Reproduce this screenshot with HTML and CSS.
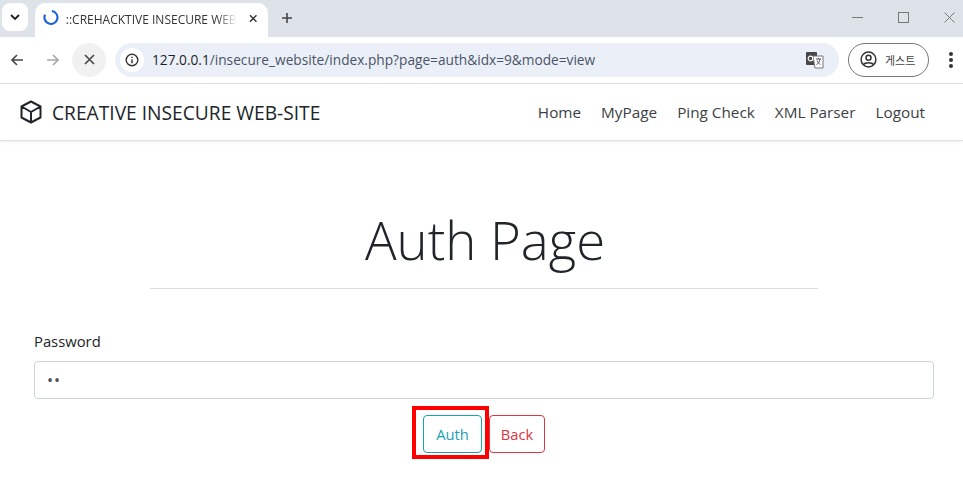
FILE: index.html
```html
<!DOCTYPE html>
<html lang="en">
<head>
    <meta charset="UTF-8">
    <meta name="viewport" content="width=device-width, initial-scale=1.0">
    <title>::CREHACKTIVE INSECURE WEB-SITE::</title>
    <link rel="stylesheet" href="styles.css">
</head>
<body>
    <!-- browser chrome -->
    <div class="tabstrip">
        <div class="tab-search">
            <svg width="10" height="6" viewBox="0 0 10 6"><path d="M1 1l4 4 4-4" fill="none" stroke="#1f1f1f" stroke-width="1.8"/></svg>
        </div>
        <div class="tab">
            <svg class="spinner" width="17" height="17" viewBox="0 0 17 17"><path d="M9.500 1.500A7 7 0 1 1 2.200 5.500" fill="none" stroke="#1a62d6" stroke-width="2.300"/></svg>
            <span class="tab-title">::CREHACKTIVE INSECURE WEB</span>
            <svg class="tab-close" width="9" height="9" viewBox="0 0 9 9"><path d="M1 1l7 7M8 1L1 8" stroke="#333" stroke-width="1.5"/></svg>
        </div>
        <svg class="new-tab" width="12" height="12" viewBox="0 0 12 12"><path d="M6 1v10M1 6h10" stroke="#444" stroke-width="1.6"/></svg>
        <div class="window-controls">
            <svg width="11" height="11" viewBox="0 0 11 11"><path d="M0 5.5h11" stroke="#777" stroke-width="1"/></svg>
            <svg width="11" height="11" viewBox="0 0 11 11"><rect x=".5" y=".5" width="10" height="10" fill="none" stroke="#777"/></svg>
            <svg width="11" height="11" viewBox="0 0 11 11"><path d="M.5.5l10 10M10.5.5l-10 10" stroke="#777" stroke-width="1"/></svg>
        </div>
    </div>
    <div class="toolbar">
        <svg class="nav-icon" width="14" height="14" viewBox="0 0 14 14"><path d="M13 7H2M7 2L2 7l5 5" fill="none" stroke="#474747" stroke-width="1.6"/></svg>
        <svg class="nav-icon" width="14" height="14" viewBox="0 0 14 14"><path d="M1 7h11M7 2l5 5-5 5" fill="none" stroke="#a8a8a8" stroke-width="1.6"/></svg>
        <div class="stop-btn">
            <svg width="11" height="11" viewBox="0 0 11 11"><path d="M1 1l9 9M10 1l-9 9" stroke="#474747" stroke-width="1.6"/></svg>
        </div>
        <div class="omnibox">
            <div class="site-info">
                <svg width="14" height="14" viewBox="0 0 14 14"><circle cx="7" cy="7" r="5.8" fill="none" stroke="#333" stroke-width="1.4"/><path d="M7 6.2v4M7 3.8v1.3" stroke="#333" stroke-width="1.4"/></svg>
            </div>
            <span class="url"><span class="url-host">127.0.0.1</span>/insecure_website/index.php?page=auth&amp;idx=9&amp;mode=view</span>
            <svg class="translate" width="18" height="17" viewBox="0 0 18 17"><rect x="0" y="0" width="11" height="13" rx="1" fill="#474747"/><path d="M7 4h10v12H9z" fill="#fff" stroke="#777"/><circle cx="4.5" cy="6.5" r="2.3" fill="none" stroke="#fff" stroke-width="1.2"/><path d="M10 7h5M12.5 6v1M14 7c-.5 3-2 5-3.500 5.500M11 8.500c.8 2 2 3.200 3.500 3.800" fill="none" stroke="#555"/></svg>
        </div>
        <div class="profile">
            <svg width="17" height="17" viewBox="0 0 17 17"><circle cx="8.500" cy="8.500" r="7.400" fill="none" stroke="#333" stroke-width="1.500"/><circle cx="8.500" cy="6.800" r="2.500" fill="none" stroke="#333" stroke-width="1.500"/><path d="M3.500 13.500c1.500-2.500 8.500-2.500 10 0" fill="none" stroke="#333" stroke-width="1.500"/></svg>
            <span class="profile-name">게스트</span>
        </div>
        <div class="menu-dots"><i></i><i></i><i></i></div>
    </div>

    <!-- page -->
    <nav class="navbar">
        <a class="brand">
            <svg width="22" height="24" viewBox="0 0 22 24"><path d="M11 1.500l9.500 5v11l-9.500 5-9.500-5v-11zM1.500 6.500l9.500 5.500 9.500-5.500M11 12v10.500" fill="none" stroke="#212529" stroke-width="2" stroke-linejoin="round"/></svg>
            CREATIVE INSECURE WEB-SITE
        </a>
        <ul class="nav-links">
            <li>Home</li>
            <li>MyPage</li>
            <li>Ping Check</li>
            <li>XML Parser</li>
            <li>Logout</li>
        </ul>
    </nav>

    <main class="content">
        <h1>Auth Page</h1>
        <hr>
        <form class="auth-form">
            <label for="password">Password</label>
            <input id="password" type="password" value="12">
            <div class="actions">
                <button type="button" class="btn btn-auth">Auth</button>
                <button type="button" class="btn btn-back">Back</button>
            </div>
        </form>
    </main>
</body>
</html>
```

FILE: styles.css
```css
* {
    box-sizing: border-box;
}
html, body {
    height: 100%;
}
body {
    margin: 0;
    background: #fff;
    color: #212529;
    font-family: "Open Sans", "Noto Sans", Arial, sans-serif;
    overflow: hidden;
}

/* browser chrome */
.tabstrip {
    display: flex;
    align-items: flex-end;
    height: 37px;
    background: #dee3ea;
    position: relative;
}
.tab-search {
    display: flex;
    align-items: center;
    justify-content: center;
    width: 26px;
    height: 28px;
    margin: 0 7px 6px 2px;
    background: #fff;
    border-radius: 8px;
}
.tab {
    display: flex;
    align-items: center;
    width: 233px;
    height: 34px;
    padding: 0 11px 0 8px;
    background: #fff;
    border-radius: 10px 10px 0 0;
}
.spinner {
    margin-bottom: 6px;
}
.tab-title {
    flex: 1;
    margin-left: 7px;
    margin-bottom: 1px;
    font-size: 12px;
    color: #333;
    white-space: nowrap;
    -webkit-mask-image: linear-gradient(to right, #000 88%, transparent);
    mask-image: linear-gradient(to right, #000 88%, transparent);
}
.tab-close {
    margin-left: 12px;
    margin-bottom: 4px;
}
.new-tab {
    margin: 0 0 13px 13px;
}
.window-controls {
    display: flex;
    gap: 35px;
    margin: 0 8px 14px auto;
}
.toolbar {
    display: flex;
    align-items: center;
    height: 47px;
    border-bottom: 1px solid #e1e1e1;
    background: #fff;
    padding-bottom: 1px;
}
.nav-icon {
    margin-left: 10px;
    margin-right: 11px;
}
.nav-icon + .nav-icon {
    margin-left: 11px;
    margin-right: 0;
}
.stop-btn {
    display: flex;
    align-items: center;
    justify-content: center;
    width: 34px;
    height: 34px;
    margin-left: 12px;
    background: #f1f1f1;
    border-radius: 50%;
}
.omnibox {
    display: flex;
    align-items: center;
    width: 724px;
    height: 34px;
    margin-left: 9px;
    padding: 0 15px 0 5px;
    background: #ebf0f8;
    border-radius: 17px;
}
.site-info {
    display: flex;
    align-items: center;
    justify-content: center;
    width: 24px;
    height: 24px;
    background: #fff;
    border-radius: 50%;
}
.url {
    flex: 1;
    margin-left: 8px;
    font-size: 13.7px;
    color: #4a5468;
}
.url-host {
    color: #1f1f1f;
}
.translate {
    margin-top: 1px;
}
.profile {
    display: flex;
    align-items: center;
    gap: 8px;
    width: 81px;
    height: 34px;
    margin-left: 9px;
    padding-left: 11px;
    border: 1px solid #777;
    border-radius: 17px;
}
.profile-name {
    font-family: "Noto Sans CJK KR", sans-serif;
    font-size: 11px;
    color: #444;
}
.menu-dots {
    display: flex;
    flex-direction: column;
    gap: 2px;
    margin-left: 20px;
}
.menu-dots i {
    width: 4px;
    height: 4px;
    background: #333;
    border-radius: 50%;
}

/* page */
.navbar {
    display: flex;
    align-items: center;
    justify-content: space-between;
    height: 57px;
    padding: 0 38px 0 20px;
    background: #fff;
    border-bottom: 1px solid #e3e3e3;
    box-shadow: 0 1px 3px rgba(0,0,0,0.08);
}
.brand {
    display: flex;
    align-items: center;
    gap: 10px;
    font-size: 19.2px;
}
.nav-links {
    display: flex;
    gap: 20px;
    margin: 0;
    padding: 0;
    list-style: none;
    font-size: 15.3px;
    color: #3a3f44;
}
.content {
    padding: 65px 29px 0 34px;
}
h1 {
    margin: 0;
    padding-left: 2px;
    font-size: 52.7px;
    font-weight: 300;
    line-height: 67px;
    text-align: center;
}
hr {
    width: 668px;
    height: 1px;
    margin: 15px 0 0 116px;
    border: 0;
    background: #dcdcdc;
}
.auth-form {
    margin-top: 40px;
}
label {
    display: block;
    margin-bottom: 8px;
    font-size: 14.8px;
    line-height: 24px;
}
input {
    display: block;
    width: 100%;
    height: 38px;
    padding: 6px 12px;
    font-size: 16px;
    letter-spacing: 1px;
    color: #495057;
    border: 1px solid #ced4da;
    border-radius: 4px;
    font-family: inherit;
}
.actions {
    display: flex;
    justify-content: center;
    gap: 7px;
    margin-top: 16px;
}
.btn {
    width: 59px;
    height: 38px;
    padding: 0;
    background: #fff;
    border: 1px solid;
    border-radius: 4px;
    font-family: inherit;
    font-size: 14.7px;
}
.btn-auth {
    position: relative;
    color: #17a2b8;
    border-color: #17a2b8;
}
/* red marker drawn on the screenshot */
.btn-auth::after {
    content: "";
    position: absolute;
    top: -10px;
    left: -12px;
    right: -8px;
    bottom: -7px;
    border: 4px solid #f00;
    pointer-events: none;
}
.btn-back {
    width: 56px;
    color: #dc3545;
    border-color: #dc3545;
}
```
